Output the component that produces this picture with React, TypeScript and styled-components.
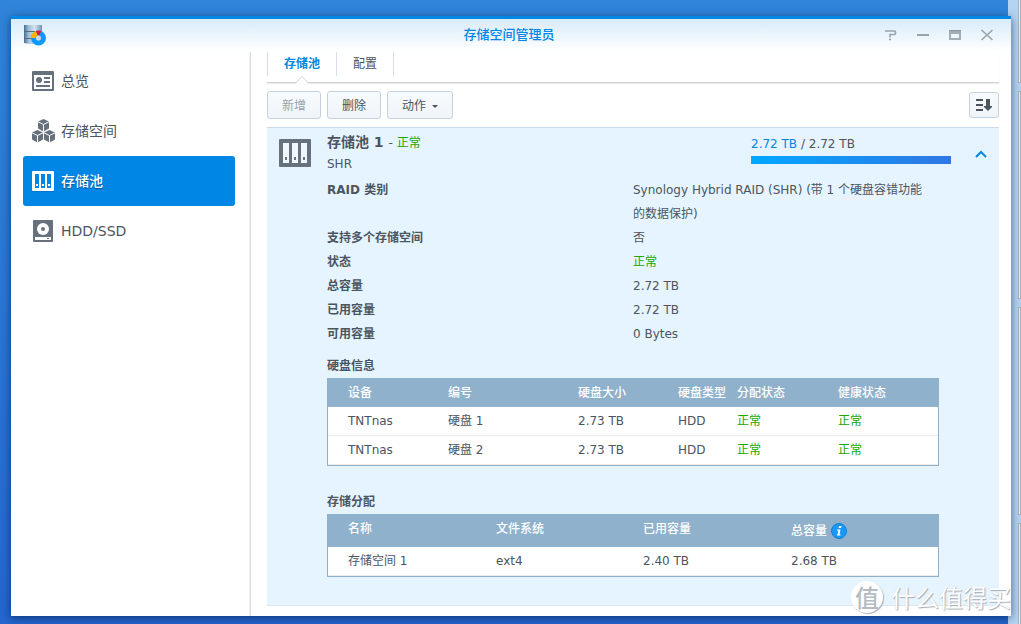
import React from "react";
import styled, { createGlobalStyle, css } from "styled-components";

const GlobalStyle = createGlobalStyle`
  *, *::before, *::after { box-sizing: border-box; }
  body {
    margin: 0;
    font-family: "DejaVu Sans", "Noto Sans CJK SC", sans-serif;
    font-size: 12px;
    line-height: 20px;
    color: #4b5560;
  }
  button { font: inherit; color: inherit; margin: 0; padding: 0; border: 0; background: none; cursor: pointer; }
  h1, h2, h3, p, dl, dd, ul { margin: 0; padding: 0; }
  svg { display: block; flex: none; }
`;

const Desktop = styled.div`
  position: relative;
  display: flex;
  min-height: 100vh;
  padding: 16px 10px 8px 11px;
  overflow: hidden;
  background: linear-gradient(#2f85da, #2467cf);
`;

const SideWidgets = styled.div`
  position: absolute;
  top: 0;
  right: 0;
  bottom: 0;
  width: 13px;
  padding-left: 10px;
  background: #b5d4f2;
  overflow: hidden;
  display: flex;
  flex-direction: column;
  gap: 8px;
`;

const Widget = styled.div<{ $short?: boolean }>`
  flex: none;
  height: ${(p) => (p.$short ? 83 : 208)}px;
  border: 1px solid #a9b1bb;
  border-top-width: ${(p) => (p.$short ? 0 : 1)}px;
  background: #e6f0fa;
`;

const Window = styled.section`
  position: relative;
  flex: 1;
  min-width: 0;
  display: flex;
  flex-direction: column;
  border-top: 3px solid #0086e5;
  background: #fff;
  box-shadow: 0 2px 9px rgba(0, 20, 60, 0.6);
`;

const TitleBar = styled.header`
  display: grid;
  grid-template-columns: 1fr auto 1fr;
  align-items: center;
  height: 33px;
  padding: 0 16px 2px 12px;
  background: linear-gradient(#d8ebf9, #fff);
`;

const WindowTitle = styled.h1`
  font-size: 13px;
  font-weight: 500;
  line-height: 20px;
  color: #0086e5;
`;

const WindowControls = styled.div`
  display: flex;
  justify-content: flex-end;
  gap: 16px;
  button { width: 16px; height: 16px; }
`;

const Body = styled.div`
  flex: 1;
  display: flex;
`;

const Sidebar = styled.nav`
  flex: none;
  width: 240px;
  padding: 4px 15px 0 12px;
  border-right: 1px solid #dcdcdc;
  box-shadow: inset -1px 0 0 #f1f1f1;
`;

const NavItem = styled.a<{ $active?: boolean }>`
  display: flex;
  align-items: center;
  gap: 5px;
  height: 50px;
  padding-left: 9px;
  border-radius: 3px;
  font-size: 14px;
  text-decoration: none;
  color: #4b5560;
  ${(p) =>
    p.$active &&
    css`
      background: #0086e5;
      color: #fff;
      font-weight: 500;
      text-shadow: 0 1px 1px rgba(0, 0, 0, 0.4);
    `}
`;

const Main = styled.main`
  flex: 1;
  min-width: 0;
  display: flex;
  flex-direction: column;
  padding: 0 12px 10px 16px;
`;

const Tabs = styled.div`
  display: flex;
  height: 31px;
  border-bottom: 1px solid #cfd1d3;
  box-shadow: 0 1px 1px #ececec;
`;

const Tab = styled.button<{ $active?: boolean }>`
  position: relative;
  && {
    height: 24px;
    padding: 0 16px;
    border-left: 1px solid #d3dfea;
    color: ${(p) => (p.$active ? "#0086e5" : "#4b5560")};
    font-weight: ${(p) => (p.$active ? 700 : 400)};
  }
  &&:last-child { border-right: 1px solid #d3dfea; }
`;

const TabNotch = styled.svg`
  position: absolute;
  left: 28px;
  top: 24px;
`;

const Toolbar = styled.div`
  display: flex;
  align-items: center;
  gap: 6px;
  padding: 8px 0;
`;

const ToolButton = styled.button`
  && {
    display: flex;
    align-items: center;
    justify-content: center;
    gap: 6px;
    height: 28px;
    padding: 1px 14px 0;
    border: 1px solid #c4d2df;
    border-radius: 3px;
    background: linear-gradient(#f8fbfd, #eff4f9);
  }
  &&:disabled { color: #9aa3ad; cursor: default; }
`;

const SortButton = styled(ToolButton)`
  && {
    width: 30px;
    height: 26px;
    margin-left: auto;
    padding: 0;
  }
`;

const Pool = styled.article`
  flex: 1;
  border-top: 1px solid #c9dbea;
  border-bottom: 1px solid #d9e8f4;
  background: #e6f4ff;
`;

const PoolHead = styled.div`
  display: flex;
  align-items: flex-start;
  padding: 4px 12px 0;
`;

const PoolIcon = styled.svg`
  margin: 7px 16px 0 0;
`;

const PoolTitle = styled.div`
  flex: 1;
  h2 {
    font-size: 14px;
    line-height: 21px;
  }
  p { line-height: 21px; }
`;

const Plain = styled.span`
  font-size: 12px;
  font-weight: 400;
`;

const Ok = styled.span`
  color: #1ba600;
`;

const Usage = styled.div`
  width: 200px;
  margin-right: 24px;
  line-height: 24px;
`;

const UsedAmount = styled.span`
  color: #0086e5;
`;

const UsageBar = styled.div`
  height: 8px;
  background: linear-gradient(90deg, #00a8ff, #3077e3);
`;

const CollapseButton = styled.button`
  && {
    width: 12px;
    height: 12px;
    margin-top: 16px;
  }
`;

const PoolBody = styled.div`
  padding: 3px 60px 28px;
`;

const Details = styled.dl`
  display: grid;
  grid-template-columns: 1fr 1fr;
  line-height: 24px;
  dt { font-weight: 700; }
  dd { padding-right: 8px; }
`;

const SectionTitle = styled.h3<{ $gap: number }>`
  margin-top: ${(p) => p.$gap}px;
  padding-bottom: 1px;
  font-size: 12px;
  font-weight: 700;
  line-height: 22px;
`;

const Table = styled.table`
  width: 100%;
  table-layout: fixed;
  border-collapse: separate;
  border-spacing: 0;
  border: 1px solid #8fb1cc;
  background: #fff;
  th, td {
    height: 29px;
    padding: 0 0 0 10px;
    text-align: left;
    white-space: nowrap;
    line-height: 20px;
  }
  th:first-child, td:first-child { padding-left: 20px; }
  th {
    height: 28px;
    background: #8fb1cc;
    color: #fff;
    font-weight: 500;
  }
  td { border-bottom: 1px solid #ececec; }
`;

const VolumeTable = styled(Table)`
  th {
    height: 32px;
    padding-top: 4px;
    vertical-align: top;
  }
`;

const WithInfo = styled.span`
  display: flex;
  align-items: center;
  gap: 4px;
  height: 24px;
`;

const Watermark = styled.div`
  position: absolute;
  right: 10px;
  bottom: 11px;
  display: flex;
  align-items: center;
  gap: 8px;
  font-family: "Noto Sans CJK SC", sans-serif;
  font-size: 24px;
  line-height: 32px;
  color: #fff;
  text-shadow: 1px 1px 1px #a3acb4, 0 0 1px #cfd6db;
  pointer-events: none;
`;

const WatermarkSeal = styled.span`
  width: 32px;
  height: 32px;
  border-radius: 50%;
  background: #fff;
  box-shadow: 1px 1px 1px #a9b4bd;
  color: #b3bcc3;
  font-weight: 500;
  text-align: center;
  text-shadow: none;
`;

const AppLogo = () => (
  <svg width="24" height="24" viewBox="0 0 24 24" aria-hidden="true">
    <defs>
      <linearGradient id="cyl" x1="0" x2="1" y1="0" y2="0">
        <stop offset="0" stopColor="#3f6f98" />
        <stop offset="0.25" stopColor="#9fbdd4" />
        <stop offset="0.6" stopColor="#d3e3ef" />
        <stop offset="1" stopColor="#6d93b3" />
      </linearGradient>
    </defs>
    <path d="M1 2h18v18q-9 2-18 0z" fill="url(#cyl)" />
    <path d="M1 8.500h18M1 15.500h18" stroke="#586b7c" strokeWidth="1" />
    <circle cx="15.500" cy="15" r="5" fill="none" stroke="#0a9aff" strokeWidth="5" />
    <path d="M8 15a7.500 7.500 0 0 1 5-7l2 4.700a3 3 0 0 0-2.500 2.300z" fill="#ffb400" />
    <path d="M13 8a7.500 7.500 0 0 1 5 0l-1.500 4.500h-2z" fill="#e8152d" />
    <circle cx="15.500" cy="15" r="2.500" fill="#c5d9e8" />
  </svg>
);

const OverviewIcon = () => (
  <svg width="24" height="24" viewBox="0 0 24 24" aria-hidden="true">
    <path fillRule="evenodd" fill="#66717d" d="M1 2h20a1 1 0 0 1 1 1v18a1 1 0 0 1-1 1H1a1 1 0 0 1-1-1V3a1 1 0 0 1 1-1zM2 6v14h18V6z" />
    <circle cx="7" cy="11" r="3" fill="#66717d" />
    <path d="M12 9h6M12 13h6M4 17h14" stroke="#66717d" strokeWidth="2" />
  </svg>
);

const Cube = ({ x, y }: { x: number; y: number }) => (
  <g transform={`translate(${x} ${y})`}>
    <path d="M5.500 0L11 2.500V9.500L5.500 12.500L0 9.500V2.500z" fill="#66717d" />
    <path d="M0 2.800L5.500 5.500L11 2.800M5.500 5.500V12.500" fill="none" stroke="#fff" strokeWidth="1" />
  </g>
);

const VolumeIcon = () => (
  <svg width="24" height="24" viewBox="0 0 24 24" aria-hidden="true">
    <Cube x={6} y={0} />
    <Cube x={0} y={11} />
    <Cube x={12} y={11} />
  </svg>
);

const PoolNavIcon = () => (
  <svg width="24" height="24" viewBox="0 0 24 24" aria-hidden="true">
    <rect y="3" width="22" height="20" rx="1" fill="#0068b8" opacity="0.6" />
    <rect y="2" width="22" height="20" rx="1" fill="#fff" />
    <path d="M3 5h4v14H3zM9 5h4v14H9zM15 5h4v14h-4z" fill="#0086e5" />
    <path d="M4 15h2v2H4zM10 15h2v2h-2zM16 15h2v2h-2z" fill="#fff" />
  </svg>
);

const DiskIcon = () => (
  <svg width="24" height="24" viewBox="0 0 24 24" aria-hidden="true">
    <rect x="1" y="1" width="20" height="22" rx="1" fill="#66717d" />
    <circle cx="11" cy="10" r="6" fill="#fff" />
    <circle cx="11" cy="10" r="2" fill="#66717d" />
    <path d="M3 18h16v3H3z" fill="#fff" />
    <path d="M15 19h2v1h-2z" fill="#66717d" />
  </svg>
);

const navItems = [
  { label: "总览", icon: <OverviewIcon /> },
  { label: "存储空间", icon: <VolumeIcon /> },
  { label: "存储池", icon: <PoolNavIcon />, active: true },
  { label: "HDD/SSD", icon: <DiskIcon /> },
];

const details: [React.ReactNode, React.ReactNode][] = [
  ["RAID 类别", "Synology Hybrid RAID (SHR) (带 1 个硬盘容错功能的数据保护)"],
  ["支持多个存储空间", "否"],
  ["状态", <Ok>正常</Ok>],
  ["总容量", "2.72 TB"],
  ["已用容量", "2.72 TB"],
  ["可用容量", "0 Bytes"],
];

const disks = ["硬盘 1", "硬盘 2"];

export default function App() {
  return (
    <>
      <GlobalStyle />
      <Desktop>
        <SideWidgets>
          <Widget $short />
          <Widget />
          <Widget />
          <Widget />
        </SideWidgets>
        <Window>
          <TitleBar>
            <AppLogo />
            <WindowTitle>存储空间管理员</WindowTitle>
            <WindowControls>
              <button aria-label="帮助">
                <svg width="16" height="16" viewBox="0 0 16 16">
                  <path d="M2 4h9.500q1 0 1 1v1.500q0 1-1 1H7V10.500M6 12.500h2" fill="none" stroke="#99a3ac" strokeWidth="1.600" />
                </svg>
              </button>
              <button aria-label="最小化">
                <svg width="16" height="16" viewBox="0 0 16 16">
                  <path d="M2 8h12" stroke="#99a3ac" strokeWidth="2" />
                </svg>
              </button>
              <button aria-label="最大化">
                <svg width="16" height="16" viewBox="0 0 16 16">
                  <path fillRule="evenodd" d="M2 3h12v10H2zM4 7v4h8V7z" fill="#a3adb6" />
                  <path d="M2 3.500h12" stroke="#8a949e" />
                </svg>
              </button>
              <button aria-label="关闭">
                <svg width="16" height="16" viewBox="0 0 16 16">
                  <path d="M2.500 3l11 10M13.500 3l-11 10" stroke="#99a3ac" strokeWidth="1.600" />
                </svg>
              </button>
            </WindowControls>
          </TitleBar>
          <Body>
            <Sidebar>
              {navItems.map((n) => (
                <NavItem key={n.label} href="#" $active={n.active}>
                  {n.icon}
                  {n.label}
                </NavItem>
              ))}
            </Sidebar>
            <Main>
              <Tabs role="tablist">
                <Tab role="tab" aria-selected="true" $active>
                  存储池
                  <TabNotch width="12" height="8" viewBox="0 0 12 8" aria-hidden="true">
                    <path d="M0 7L6 1L12 7V8H0z" fill="#fff" />
                    <path d="M0 6.500L6 0.500L12 6.500" fill="none" stroke="#cfd1d3" />
                  </TabNotch>
                </Tab>
                <Tab role="tab" aria-selected="false">配置</Tab>
              </Tabs>
              <Toolbar>
                <ToolButton disabled>新增</ToolButton>
                <ToolButton>删除</ToolButton>
                <ToolButton aria-haspopup="menu">
                  动作
                  <svg width="6" height="4" viewBox="0 0 6 4" aria-hidden="true">
                    <path d="M0 1h6L3 4z" fill="#4b5560" />
                  </svg>
                </ToolButton>
                <SortButton aria-label="排序">
                  <svg width="16" height="14" viewBox="0 0 16 14">
                    <path d="M0 2h7M0 7h7M0 12h7" stroke="#4b5560" strokeWidth="2" />
                    <path d="M10 1h4v7h2v1l-4 4-4-4V8h2z" fill="#4b5560" />
                  </svg>
                </SortButton>
              </Toolbar>
              <Pool>
                <PoolHead>
                  <PoolIcon width="32" height="28" viewBox="0 0 32 28" aria-hidden="true">
                    <rect width="32" height="28" rx="1" fill="#66717d" />
                    <path d="M4 4h6v20H4zM13 4h6v20h-6zM22 4h6v20h-6z" fill="#eef7ff" />
                    <path d="M6 18h2v3H6zM15 18h2v3h-2zM24 18h2v3h-2z" fill="#66717d" />
                  </PoolIcon>
                  <PoolTitle>
                    <h2>
                      存储池 1 <Plain>- <Ok>正常</Ok></Plain>
                    </h2>
                    <p>SHR</p>
                  </PoolTitle>
                  <Usage>
                    <UsedAmount>2.72 TB</UsedAmount> / 2.72 TB
                    <UsageBar />
                  </Usage>
                  <CollapseButton aria-label="收起" aria-expanded="true">
                    <svg width="12" height="12" viewBox="0 0 12 12">
                      <path d="M1 9l5-5 5 5" fill="none" stroke="#0086e5" strokeWidth="2" />
                    </svg>
                  </CollapseButton>
                </PoolHead>
                <PoolBody>
                  <Details>
                    {details.map(([label, value], i) => (
                      <React.Fragment key={i}>
                        <dt>{label}</dt>
                        <dd>{value}</dd>
                      </React.Fragment>
                    ))}
                  </Details>
                  <SectionTitle $gap={9}>硬盘信息</SectionTitle>
                  <Table>
                    <colgroup>
                      {[110, 130, 100, 59, 101, 110].map((w, i) => (
                        <col key={i} width={w} />
                      ))}
                    </colgroup>
                    <thead>
                      <tr>
                        {["设备", "编号", "硬盘大小", "硬盘类型", "分配状态", "健康状态"].map((h) => (
                          <th key={h} scope="col">{h}</th>
                        ))}
                      </tr>
                    </thead>
                    <tbody>
                      {disks.map((d) => (
                        <tr key={d}>
                          <td>TNTnas</td>
                          <td>{d}</td>
                          <td>2.73 TB</td>
                          <td>HDD</td>
                          <td><Ok>正常</Ok></td>
                          <td><Ok>正常</Ok></td>
                        </tr>
                      ))}
                    </tbody>
                  </Table>
                  <SectionTitle $gap={25}>存储分配</SectionTitle>
                  <VolumeTable>
                    <colgroup>
                      {[158, 147, 148, 157].map((w, i) => (
                        <col key={i} width={w} />
                      ))}
                    </colgroup>
                    <thead>
                      <tr>
                        <th scope="col">名称</th>
                        <th scope="col">文件系统</th>
                        <th scope="col">已用容量</th>
                        <th scope="col">
                          <WithInfo>
                            总容量
                            <svg width="16" height="16" viewBox="0 0 16 16" aria-hidden="true">
                              <circle cx="8" cy="8" r="7.500" fill="#1b98f5" stroke="#0d7fd6" />
                              <path d="M8 3h2.500L10 5H7.600zM6 6.500h3.500L8.500 11.500h1V12.500H6V11.500h.6L7.300 7.500H6z" fill="#fff" />
                            </svg>
                          </WithInfo>
                        </th>
                      </tr>
                    </thead>
                    <tbody>
                      <tr>
                        <td>存储空间 1</td>
                        <td>ext4</td>
                        <td>2.40 TB</td>
                        <td>2.68 TB</td>
                      </tr>
                    </tbody>
                  </VolumeTable>
                </PoolBody>
              </Pool>
            </Main>
          </Body>
        </Window>
        <Watermark>
          <WatermarkSeal>值</WatermarkSeal>
          <span>什么值得买</span>
        </Watermark>
      </Desktop>
    </>
  );
}
